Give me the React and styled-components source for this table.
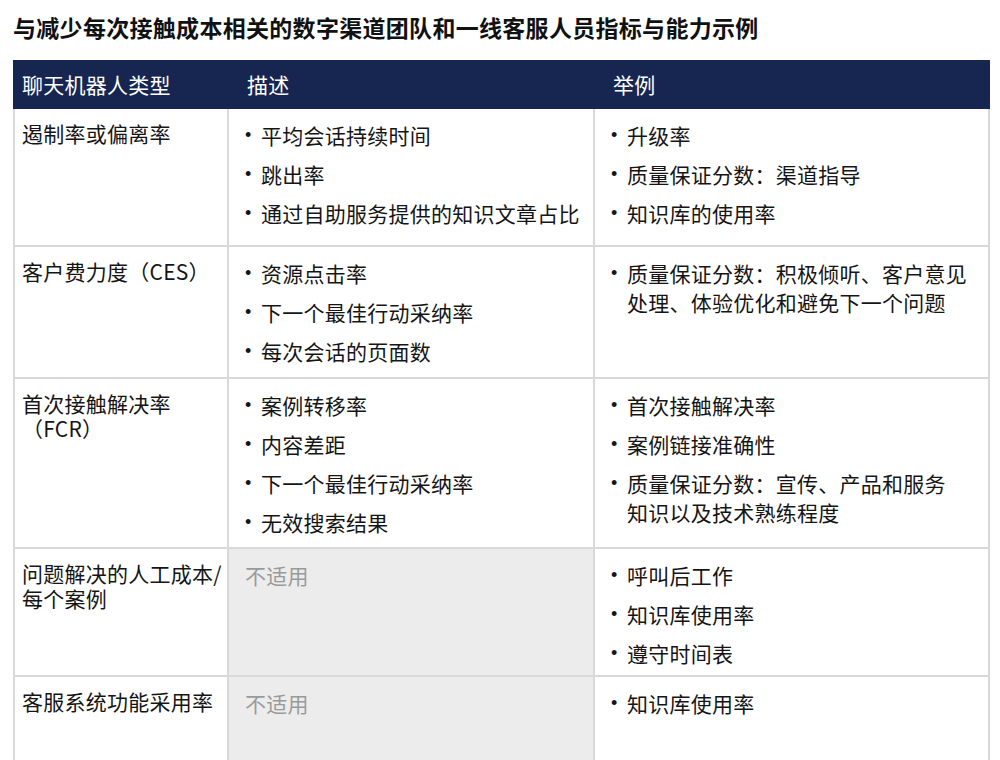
import React from 'react';
import styled, { createGlobalStyle } from 'styled-components';

const GlobalStyle = createGlobalStyle`
  body {
    margin: 0;
    background: #fff;
    font-family: "Noto Sans CJK SC", "Noto Sans", sans-serif;
    color: #151515;
  }
`;

const Page = styled.div`
  padding: 11px 10px 0 13px;
`;

const Title = styled.h1`
  margin: 0 0 17px;
  font-size: 23px;
  line-height: 32px;
  font-weight: 700;
  letter-spacing: 0.3px;
  color: #111;
`;

const Table = styled.div`
  display: grid;
  grid-template-columns: 216px 366px 395px;
  grid-template-rows: 49px 138px 132px 170px 128px 120px;
  letter-spacing: 0.25px;
`;

const HeadCell = styled.div`
  background: #162651;
  color: #fff;
  font-size: 21px;
  line-height: 49px;
  padding-left: ${p => (p.$first ? '9px' : '18px')};
`;

const Cell = styled.div`
  box-sizing: border-box;
  border-bottom: 2px solid #d9d9d9;
  border-right: 2px solid #d9d9d9;
  border-left: ${p => (p.$first ? '2px solid #d9d9d9' : 'none')};
  background: ${p => (p.$muted ? '#ececec' : '#fff')};
  padding: ${p => (p.$first ? '12px 4px 0 7px' : '12px 12px 0 16px')};
  font-size: 21px;
  line-height: ${p => (p.$first ? '25px' : '29px')};
`;

const Muted = styled.span`
  color: #9a9a9a;
`;

const List = styled.ul`
  margin: 0;
  padding: 0;
  list-style: none;
  display: flex;
  flex-direction: column;
  gap: 10px;
`;

const Item = styled.li`
  display: flex;
`;

const Dot = styled.span`
  flex: none;
  width: 16px;
  font-family: "Liberation Sans", sans-serif;
  font-size: 18px;
`;

const rows = [
  {
    name: '遏制率或偏离率',
    desc: ['平均会话持续时间', '跳出率', '通过自助服务提供的知识文章占比'],
    ex: ['升级率', '质量保证分数：渠道指导', '知识库的使用率'],
  },
  {
    name: '客户费力度（CES）',
    desc: ['资源点击率', '下一个最佳行动采纳率', '每次会话的页面数'],
    ex: [['质量保证分数：积极倾听、客户意见', '处理、体验优化和避免下一个问题']],
  },
  {
    name: '首次接触解决率（FCR）',
    desc: ['案例转移率', '内容差距', '下一个最佳行动采纳率', '无效搜索结果'],
    ex: ['首次接触解决率', '案例链接准确性', ['质量保证分数：宣传、产品和服务', '知识以及技术熟练程度']],
  },
  {
    name: '问题解决的人工成本/每个案例',
    desc: null,
    ex: ['呼叫后工作', '知识库使用率', '遵守时间表'],
  },
  {
    name: '客服系统功能采用率',
    desc: null,
    ex: ['知识库使用率'],
  },
];

const Bullets = ({ items }) => (
  <List>
    {items.map((t, i) => (
      <Item key={i}>
        <Dot>•</Dot>
        <span>
          {Array.isArray(t)
            ? t.map((line, j) => (
                <React.Fragment key={j}>
                  {j > 0 && <br />}
                  {line}
                </React.Fragment>
              ))
            : t}
        </span>
      </Item>
    ))}
  </List>
);

export default function App() {
  return (
    <Page>
      <GlobalStyle />
      <Title>与减少每次接触成本相关的数字渠道团队和一线客服人员指标与能力示例</Title>
      <Table>
        <HeadCell $first>聊天机器人类型</HeadCell>
        <HeadCell>描述</HeadCell>
        <HeadCell>举例</HeadCell>
        {rows.map(r => (
          <React.Fragment key={r.name}>
            <Cell $first>{r.name}</Cell>
            <Cell $muted={!r.desc}>
              {r.desc ? <Bullets items={r.desc} /> : <Muted>不适用</Muted>}
            </Cell>
            <Cell>
              <Bullets items={r.ex} />
            </Cell>
          </React.Fragment>
        ))}
      </Table>
    </Page>
  );
}
